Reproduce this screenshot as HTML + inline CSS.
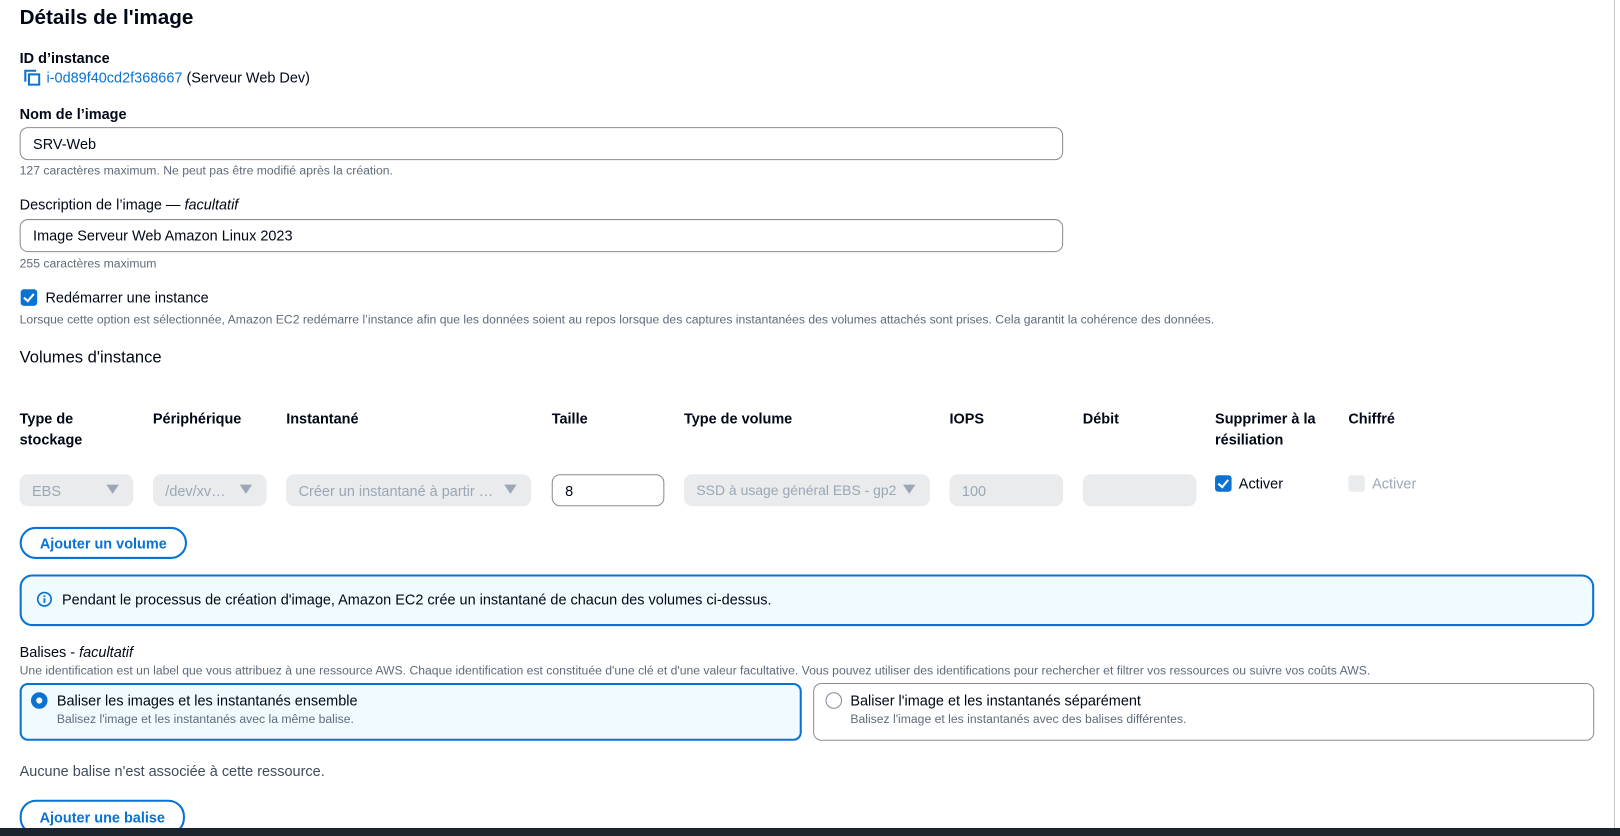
<!DOCTYPE html>
<html><head><meta charset="utf-8"><style>
*{box-sizing:border-box;margin:0;padding:0}
body{width:1620px;height:836px;overflow:hidden;background:#fff;font-family:"Liberation Sans",sans-serif;color:#000716;position:relative}
#w{position:absolute;left:0;top:0;width:1568px;height:809px;transform:scale(1.0332);transform-origin:0 0}
.a{position:absolute;white-space:nowrap}
.b{font-weight:bold;font-size:14px}
.h{font-size:11.8px;color:#5f6b7a}
.inp{position:absolute;border:1px solid #8c8c94;border-radius:8px;background:#fff;font-size:14px;padding-left:12px;display:flex;align-items:center}
.sel{position:absolute;background:#e9ebed;border-radius:8px;font-size:14px;color:#9ba7b6;padding-left:12px;display:flex;align-items:center;height:31px;top:459px;overflow:hidden}
.sel .ar{position:absolute;right:14px;top:10px;width:0;height:0;border-left:6px solid transparent;border-right:6px solid transparent;border-top:9px solid #9ba7b6}
.btn{position:absolute;border:2px solid #0972d3;border-radius:16px;color:#0972d3;font-weight:bold;font-size:14px;display:flex;align-items:center;justify-content:center;background:#fff}
.cb{position:absolute;width:16px;height:16px;border-radius:3px;background:#0972d3}
.cb:after{content:"";position:absolute;left:5px;top:2px;width:4px;height:8px;border:solid #fff;border-width:0 2px 2px 0;transform:rotate(40deg)}
</style></head><body>
<div id="w">
<div class="a" style="left:19px;top:6px;font-size:20px;font-weight:bold">Détails de l'image</div>
<div class="a b" style="left:19px;top:48px">ID d’instance</div>
<svg class="a" style="left:23px;top:67px" width="16" height="16" viewBox="0 0 16 16"><path d="M1.5 12V1.5H12" fill="none" stroke="#0972d3" stroke-width="2"/><rect x="5" y="5" width="10" height="10" fill="none" stroke="#0972d3" stroke-width="2"/></svg>
<div class="a" style="left:45px;top:67px;font-size:14px"><span style="color:#0972d3">i-0d89f40cd2f368667</span> (Serveur Web Dev)</div>
<div class="a b" style="left:19px;top:102px">Nom de l’image</div>
<div class="inp" style="left:19px;top:123px;width:1010px;height:32px">SRV-Web</div>
<div class="a h" style="left:19px;top:158px">127 caractères maximum. Ne peut pas être modifié après la création.</div>
<div class="a" style="left:19px;top:190px;font-size:14px">Description de l’image — <i>facultatif</i></div>
<div class="inp" style="left:19px;top:212px;width:1010px;height:32px">Image Serveur Web Amazon Linux 2023</div>
<div class="a h" style="left:19px;top:248px">255 caractères maximum</div>
<div class="cb" style="left:20px;top:280px"></div>
<div class="a" style="left:44px;top:280px;font-size:14px">Redémarrer une instance</div>
<div class="a h" style="left:19px;top:302px">Lorsque cette option est sélectionnée, Amazon EC2 redémarre l’instance afin que les données soient au repos lorsque des captures instantanées des volumes attachés sont prises. Cela garantit la cohérence des données.</div>
<div class="a" style="left:19px;top:338px;font-size:16px">Volumes d'instance</div>
<div class="a b" style="left:19px;top:395px;line-height:20px">Type de<br>stockage</div>
<div class="a b" style="left:148px;top:395px;line-height:20px">Périphérique</div>
<div class="a b" style="left:277px;top:395px;line-height:20px">Instantané</div>
<div class="a b" style="left:534px;top:395px;line-height:20px">Taille</div>
<div class="a b" style="left:662px;top:395px;line-height:20px">Type de volume</div>
<div class="a b" style="left:919px;top:395px;line-height:20px">IOPS</div>
<div class="a b" style="left:1048px;top:395px;line-height:20px">Débit</div>
<div class="a b" style="left:1176px;top:395px;line-height:20px">Supprimer à la<br>résiliation</div>
<div class="a b" style="left:1305px;top:395px;line-height:20px">Chiffré</div>
<div class="sel" style="left:19px;width:110px">EBS<span class="ar"></span></div>
<div class="sel" style="left:148px;width:110px">/dev/xv…<span class="ar"></span></div>
<div class="sel" style="left:277px;width:237px">Créer un instantané à partir …<span class="ar"></span></div>
<div class="inp" style="left:534px;top:459px;width:109px;height:31px">8</div>
<div class="sel" style="left:662px;width:238px;font-size:13.5px">SSD à usage général EBS - gp2<span class="ar" style="background:#e9ebed"></span></div>
<div class="sel" style="left:919px;width:110px">100</div>
<div class="sel" style="left:1048px;width:110px"></div>
<div class="cb" style="left:1176px;top:460px"></div>
<div class="a" style="left:1199px;top:460px;font-size:14px">Activer</div>
<div class="a" style="left:1305px;top:460px;width:16px;height:16px;border-radius:3px;background:#e9ebed"></div>
<div class="a" style="left:1328px;top:460px;font-size:14px;color:#9ba7b6">Activer</div>
<div class="btn" style="left:19px;top:510px;width:162px;height:31px">Ajouter un volume</div>
<div class="a" style="left:19px;top:556px;width:1524px;height:50px;border:2px solid #0972d3;border-radius:12px;background:#f0fbff"></div>
<svg class="a" style="left:35px;top:572px" width="16" height="16" viewBox="0 0 16 16"><circle cx="8" cy="8" r="6.5" fill="none" stroke="#0972d3" stroke-width="1.6"/><path d="M8 7v4.5M8 4.3v1.5" stroke="#0972d3" stroke-width="1.8"/></svg>
<div class="a" style="left:60px;top:572px;font-size:14px">Pendant le processus de création d'image, Amazon EC2 crée un instantané de chacun des volumes ci-dessus.</div>
<div class="a" style="left:19px;top:623px;font-size:14px">Balises - <i>facultatif</i></div>
<div class="a h" style="left:19px;top:642px">Une identification est un label que vous attribuez à une ressource AWS. Chaque identification est constituée d'une clé et d'une valeur facultative. Vous pouvez utiliser des identifications pour rechercher et filtrer vos ressources ou suivre vos coûts AWS.</div>
<div class="a" style="left:19px;top:661px;width:757px;height:56px;border:2px solid #0972d3;border-radius:8px;background:#f0fbff"></div>
<div class="a" style="left:30px;top:670px;width:16px;height:16px;border-radius:50%;border:5px solid #0972d3;background:#fff"></div>
<div class="a" style="left:55px;top:670px;font-size:14px">Baliser les images et les instantanés ensemble</div>
<div class="a h" style="left:55px;top:689px">Balisez l'image et les instantanés avec la même balise.</div>
<div class="a" style="left:787px;top:661px;width:756px;height:56px;border:1px solid #8c8c94;border-radius:8px"></div>
<div class="a" style="left:799px;top:670px;width:16px;height:16px;border-radius:50%;border:1.5px solid #7d8998"></div>
<div class="a" style="left:823px;top:670px;font-size:14px">Baliser l'image et les instantanés séparément</div>
<div class="a h" style="left:823px;top:689px">Balisez l'image et les instantanés avec des balises différentes.</div>
<div class="a" style="left:19px;top:738px;font-size:14px;color:#414d5c">Aucune balise n'est associée à cette ressource.</div>
<div class="btn" style="left:19px;top:774px;width:160px;height:34px">Ajouter une balise</div>
</div>
<div class="a" style="left:1614px;top:0;width:1px;height:828px;background:#c6c6cd"></div>
<div class="a" style="left:0;top:828px;width:1620px;height:8px;background:#1b232d"></div>
</body></html>
